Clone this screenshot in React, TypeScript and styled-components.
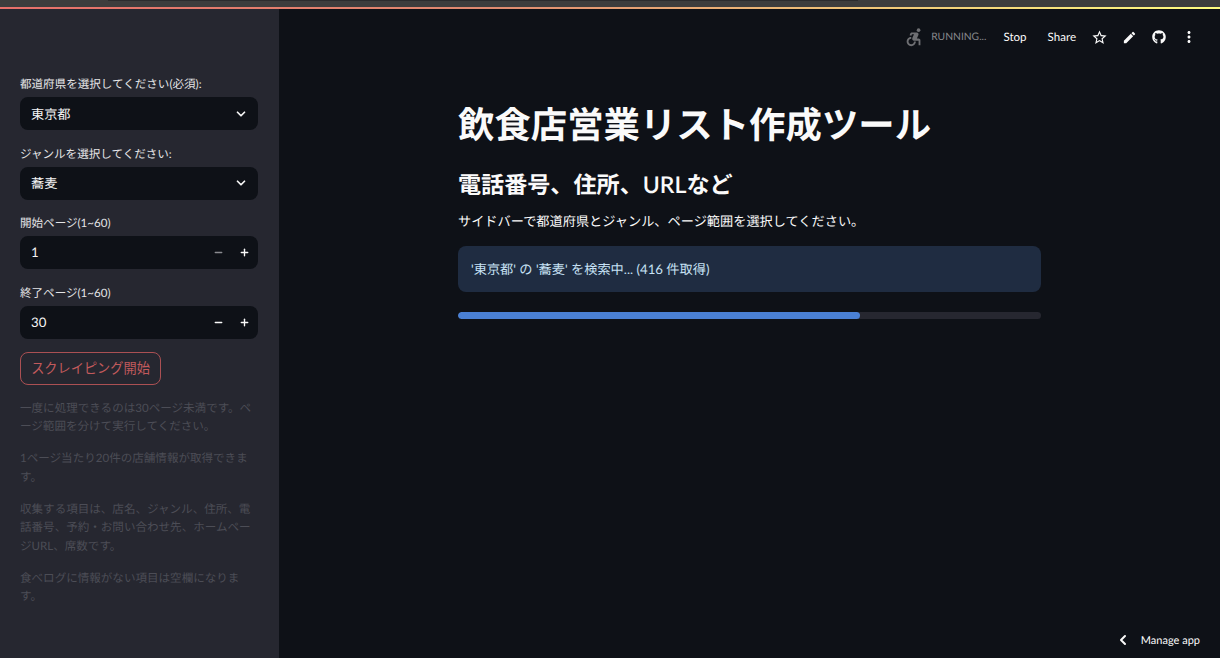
import React from "react";
import styled, { createGlobalStyle } from "styled-components";
import { ChevronDown, ChevronLeft, Minus, Plus } from "lucide-react";
import { MdAccessibleForward, MdEdit, MdMoreVert, MdStarBorder } from "react-icons/md";
import { FaGithub } from "react-icons/fa";

const GlobalStyle = createGlobalStyle`
  html, body { margin: 0; padding: 0; height: 100%; background: #0e1117; }
  body {
    font-family: Lato, "Noto Sans CJK JP", "Noto Sans", sans-serif;
    color: #fafafa;
    overflow: hidden;
    text-rendering: geometricPrecision;
  }
  #root { height: 100%; }
`;

const Page = styled.div`
  position: relative;
  width: 1220px;
  height: 658px;
  display: flex;
  flex-direction: column;
  overflow: hidden;
`;

// browser chrome strip that got caught in the capture
const TopStrip = styled.div`
  height: 7px;
  flex: none;
  background: #3d3d3d;
  padding-left: 108px;
`;

const TabEdge = styled.div`
  width: 750px;
  height: 1px;
  background: #2c2c2e;
`;

const Rainbow = styled.div`
  height: 2px;
  flex: none;
  background: linear-gradient(90deg, #e8706a, #e08a70 40%, #fffd80);
`;

const Body = styled.div`
  flex: 1;
  display: flex;
  min-height: 0;
`;

const Sidebar = styled.aside`
  width: 279px;
  flex: none;
  box-sizing: border-box;
  padding: 65px 21px 0 20px;
  background: #262730;
`;

const Field = styled.div`
  margin-bottom: 13.6px;
`;

const Label = styled.label`
  display: block;
  height: 23px;
  box-sizing: border-box;
  padding-top: 2px;
  font-size: 11.55px;
  line-height: 18px;
  color: #e4e4e6;
`;

const Control = styled.div<{ $stepper?: boolean }>`
  height: 33px;
  box-sizing: border-box;
  border-radius: 8px;
  background: #0e1117;
  display: flex;
  align-items: center;
  padding: 0 ${(p) => (p.$stepper ? "1px" : "10px")} 0 11px;
  font-size: 13.2px;
  color: #f5f5f5;
`;

const Value = styled.span`
  flex: 1;
  margin-top: -1px;
`;

const StepButton = styled.span<{ $dim?: boolean }>`
  width: 26px;
  display: flex;
  justify-content: center;
  color: ${(p) => (p.$dim ? "#8a8b90" : "#fafafa")};
`;

const StartButton = styled.button`
  display: block;
  width: 141px;
  height: 33px;
  padding: 0 0 2px;
  margin-bottom: 14.5px;
  box-sizing: border-box;
  border: 1px solid #ab5053;
  border-radius: 8px;
  background: transparent;
  color: #c25a5c;
  font-family: inherit;
  font-size: 13.2px;
`;

const Note = styled.p`
  margin: 0 0 13.5px;
  font-size: 11.55px;
  line-height: 18.5px;
  color: #4c4d56;
`;

const Main = styled.main`
  flex: 1;
  min-width: 0;
  display: flex;
  flex-direction: column;
`;

const Toolbar = styled.header`
  height: 42px;
  margin-top: 7px;
  padding-right: 16px;
  display: flex;
  align-items: center;
  justify-content: flex-end;
`;

const Running = styled.div`
  display: flex;
  align-items: center;
  margin-right: 17px;
  font-size: 10.3px;
  color: #85868a;
`;

const RunningIcon = styled(MdAccessibleForward)`
  margin-right: 6px;
  color: #6e6f73;
`;

const ToolText = styled.span<{ $last?: boolean }>`
  font-size: 11.55px;
  margin-top: 1px;
  color: #fafafa;
  margin-right: ${(p) => (p.$last ? "8px" : "21px")};
`;

const ToolIcon = styled.span`
  width: 30px;
  display: flex;
  justify-content: center;
  color: #fafafa;
`;

const Content = styled.section`
  width: 583px;
  margin: 38px 0 0 179px;
`;

const Title = styled.h1`
  margin: 0;
  font-size: 36.4px;
  line-height: 56px;
  font-weight: 700;
  color: #fafafa;
`;

const SubTitle = styled.h2`
  margin: 15px 0 0;
  font-size: 23.1px;
  line-height: 34px;
  font-weight: 600;
`;

const Lead = styled.p`
  margin: 10px 0 0;
  font-size: 13.2px;
  line-height: 20px;
`;

const Info = styled.div`
  margin-top: 15px;
  height: 46px;
  box-sizing: border-box;
  padding: 0 13px 2px;
  display: flex;
  align-items: center;
  border-radius: 8px;
  background: #1f2c41;
  color: #c7e2f5;
  font-size: 13.2px;
`;

const Track = styled.div`
  margin-top: 20px;
  height: 7px;
  border-radius: 4px;
  background: #262730;
  overflow: hidden;
`;

const Fill = styled.div`
  height: 100%;
  border-radius: 4px;
  background: #4a80d4;
`;

const ManageApp = styled.div`
  position: absolute;
  right: 20px;
  bottom: 10px;
  display: flex;
  align-items: center;
  gap: 10px;
  font-size: 11px;
  color: #fafafa;
`;

const fields = [
  { label: "都道府県を選択してください(必須):", value: "東京都" },
  { label: "ジャンルを選択してください:", value: "蕎麦" },
];

const steppers = [
  { label: "開始ページ(1~60)", value: "1", dimMinus: true },
  { label: "終了ページ(1~60)", value: "30", dimMinus: false },
];

const notes = [
  "一度に処理できるのは30ページ未満です。ページ範囲を分けて実行してください。",
  "1ページ当たり20件の店舗情報が取得できます。",
  "収集する項目は、店名、ジャンル、住所、電話番号、予約・お問い合わせ先、ホームページURL、席数です。",
  "食べログに情報がない項目は空欄になります。",
];

export default function App() {
  const progress = 69;

  return (
    <>
      <GlobalStyle />
      <Page>
        <TopStrip>
          <TabEdge />
        </TopStrip>
        <Rainbow />
        <Body>
          {/* Sidebar */}
          <Sidebar>
            {fields.map((f) => (
              <Field key={f.label}>
                <Label>{f.label}</Label>
                <Control>
                  <Value>{f.value}</Value>
                  <ChevronDown size={14} strokeWidth={3} />
                </Control>
              </Field>
            ))}
            {steppers.map((s) => (
              <Field key={s.label}>
                <Label>{s.label}</Label>
                <Control $stepper>
                  <Value>{s.value}</Value>
                  <StepButton $dim={s.dimMinus}>
                    <Minus size={11} strokeWidth={3} />
                  </StepButton>
                  <StepButton>
                    <Plus size={11} strokeWidth={3} />
                  </StepButton>
                </Control>
              </Field>
            ))}
            <StartButton>スクレイピング開始</StartButton>
            {notes.map((n) => (
              <Note key={n}>{n}</Note>
            ))}
          </Sidebar>

          {/* Main */}
          <Main>
            <Toolbar>
              <Running>
                <RunningIcon size={22} />
                RUNNING...
              </Running>
              <ToolText>Stop</ToolText>
              <ToolText $last>Share</ToolText>
              <ToolIcon>
                <MdStarBorder size={17} />
              </ToolIcon>
              <ToolIcon>
                <MdEdit size={15} />
              </ToolIcon>
              <ToolIcon>
                <FaGithub size={14} />
              </ToolIcon>
              <ToolIcon>
                <MdMoreVert size={18} />
              </ToolIcon>
            </Toolbar>
            <Content>
              <Title>飲食店営業リスト作成ツール</Title>
              <SubTitle>電話番号、住所、URLなど</SubTitle>
              <Lead>サイドバーで都道府県とジャンル、ページ範囲を選択してください。</Lead>
              <Info>'東京都' の '蕎麦' を検索中... (416 件取得)</Info>
              <Track>
                <Fill style={{ width: `${progress}%` }} />
              </Track>
            </Content>
          </Main>
        </Body>
        <ManageApp>
          <ChevronLeft size={16} strokeWidth={3} />
          Manage app
        </ManageApp>
      </Page>
    </>
  );
}
